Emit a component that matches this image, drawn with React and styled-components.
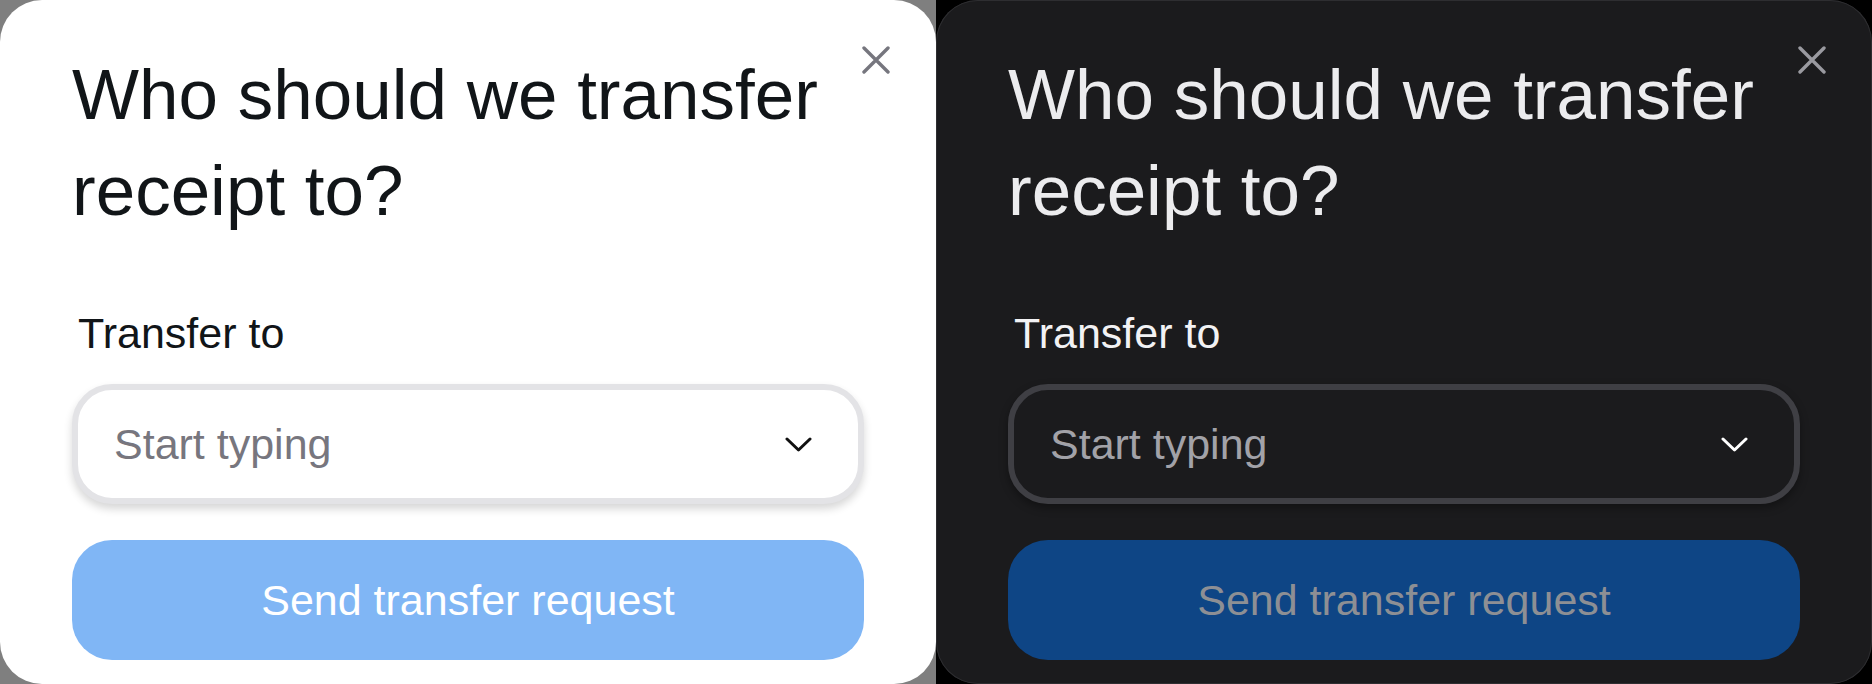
import React from "react";
import styled, { createGlobalStyle } from "styled-components";

const GlobalStyle = createGlobalStyle`
  * { box-sizing: border-box; }
  body {
    margin: 0;
    background: #000;
    font-family: "Liberation Sans", Arial, sans-serif;
  }
`;

const themes = {
  light: {
    backdrop: "#7f7f7f",
    panel: "#ffffff",
    edge: "transparent",
    title: "#111518",
    label: "#111518",
    close: "#76767e",
    fieldBg: "#ffffff",
    fieldBorder: "#e3e3e6",
    fieldShadow: "0 5px 8px rgba(0, 0, 0, 0.16)",
    placeholder: "#77767e",
    chevron: "#111111",
    button: "#80b6f5",
    buttonText: "#ffffff",
  },
  dark: {
    backdrop: "#000000",
    panel: "#1b1b1d",
    edge: "#2e2e31",
    title: "#ececee",
    label: "#f2f2f4",
    close: "#9a9aa0",
    fieldBg: "#1b1b1d",
    fieldBorder: "#3f3f44",
    fieldShadow: "0 4px 8px rgba(0, 0, 0, 0.35)",
    placeholder: "#a2a2a8",
    chevron: "#ffffff",
    button: "#0e4585",
    buttonText: "#8d8f94",
  },
};

function CloseIcon({ color }) {
  return (
    <svg width="28" height="28" viewBox="0 0 28 28" fill="none">
      <path
        d="M2 2 L26 26 M26 2 L2 26"
        stroke={color}
        strokeWidth="3.4"
        strokeLinecap="round"
      />
    </svg>
  );
}

function ChevronIcon({ color }) {
  return (
    <svg width="27" height="15" viewBox="0 0 27 15" fill="none">
      <path
        d="M2 2 L13.5 13 L25 2"
        stroke={color}
        strokeWidth="3"
        strokeLinecap="round"
        strokeLinejoin="round"
      />
    </svg>
  );
}

function TransferModal({ mode }) {
  const t = themes[mode];
  return (
    <Cell $t={t}>
      <Panel $t={t}>
        <Header>
          <Title $t={t}>Who should we transfer receipt to?</Title>
          <CloseButton aria-label="Close">
            <CloseIcon color={t.close} />
          </CloseButton>
        </Header>
        <Label $t={t}>Transfer to</Label>
        <Field $t={t}>
          <Placeholder $t={t}>Start typing</Placeholder>
          <ChevronIcon color={t.chevron} />
        </Field>
        <SendButton $t={t}>Send transfer request</SendButton>
      </Panel>
    </Cell>
  );
}

export default function App() {
  return (
    <>
      <GlobalStyle />
      <Page>
        <TransferModal mode="light" />
        <TransferModal mode="dark" />
      </Page>
    </>
  );
}

const Page = styled.div`
  display: grid;
  grid-template-columns: 936px 936px;
  height: 684px;
  overflow: hidden;
`;

const Cell = styled.div`
  background: ${(p) => p.$t.backdrop};
  height: 684px;
`;

const Panel = styled.div`
  height: 684px;
  display: flex;
  flex-direction: column;
  padding: 46px 72px 24px 72px;
  background: ${(p) => p.$t.panel};
  border-radius: 42px;
  box-shadow: inset 0 0 0 1px ${(p) => p.$t.edge};
`;

const Header = styled.div`
  display: flex;
  justify-content: space-between;
  align-items: flex-start;
  margin-right: -26px;
`;

const Title = styled.h1`
  margin: 1px 0 0 0;
  max-width: 800px;
  font-size: 71px;
  line-height: 96px;
  font-weight: 400;
  color: ${(p) => p.$t.title};
`;

const CloseButton = styled.button`
  display: flex;
  padding: 0;
  border: none;
  background: none;
  cursor: pointer;
`;

const Label = styled.label`
  margin: 69px 0 0 6px;
  font-size: 43px;
  line-height: 50px;
  color: ${(p) => p.$t.label};
`;

const Field = styled.div`
  margin-top: 26px;
  height: 120px;
  display: flex;
  align-items: center;
  justify-content: space-between;
  padding: 0 46px 0 36px;
  background: ${(p) => p.$t.fieldBg};
  border: 6px solid ${(p) => p.$t.fieldBorder};
  border-radius: 40px;
  box-shadow: ${(p) => p.$t.fieldShadow};
`;

const Placeholder = styled.span`
  font-size: 43px;
  color: ${(p) => p.$t.placeholder};
`;

const SendButton = styled.button`
  margin-top: 36px;
  height: 120px;
  border: none;
  border-radius: 40px;
  background: ${(p) => p.$t.button};
  color: ${(p) => p.$t.buttonText};
  font-family: inherit;
  font-size: 43px;
  cursor: pointer;
`;
